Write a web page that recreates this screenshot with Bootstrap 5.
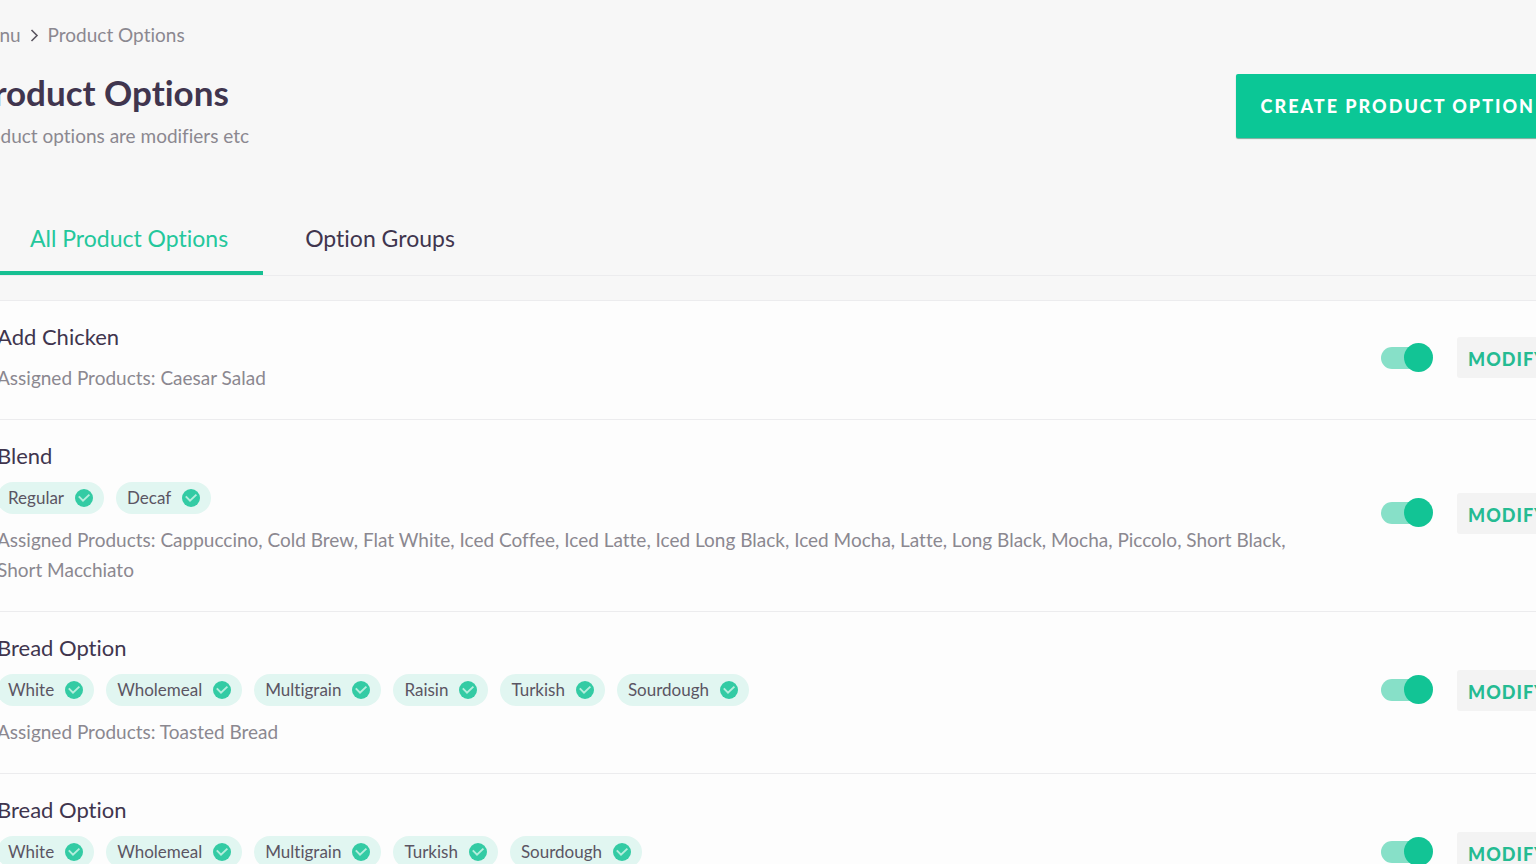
<!DOCTYPE html>
<html lang="en">
<head>
<meta charset="utf-8">
<meta name="viewport" content="width=device-width, initial-scale=1">
<title>Product Options</title>
<link href="https://cdn.jsdelivr.net/npm/bootstrap@5.3.0/dist/css/bootstrap.min.css" rel="stylesheet">
<style>
  :root { --ink: #40354e; --soft: #8b8890; --brand: #0bc796; --rule: #ececee; }
  html { overflow: hidden; }
  body { background: #f7f7f7; color: var(--ink); font-family: Lato, sans-serif; font-size: 19px; line-height: 30px; font-variant-ligatures: none; overflow: hidden; height: 100vh; }
  /* the page runs past both sides of the window */
  .bleed { margin: 0 -24px 0 -28px; padding-top: 20px; }
  .crumbs { --bs-breadcrumb-margin-bottom: 0; gap: 9px; color: var(--soft); }
  .crumbs a { color: inherit; text-decoration: none; }
  .page-title { font-size: 35px; line-height: 40px; font-weight: 700; margin: 0 0 9px; }
  .soft { color: var(--soft); }
  .page-head { margin-top: 22px; }
  .btn-create { --bs-btn-padding-x: 25px; --bs-btn-color: #fff; --bs-btn-bg: var(--brand); --bs-btn-hover-color: #fff; --bs-btn-hover-bg: #0ab588; --bs-btn-border-radius: 2px; height: 64px; margin-top: 2px; font-size: 18px; font-weight: 900; letter-spacing: 2px; border: 0; white-space: nowrap; box-shadow: 0 1px 1px #7aa99b; }
  .btn-modify { --bs-btn-padding-x: 11px; --bs-btn-color: #25bb92; --bs-btn-bg: #f3f3f3; --bs-btn-hover-color: #0aa77d; --bs-btn-hover-bg: #eaeaea; --bs-btn-border-radius: 3px; width: 103px; height: 41px; padding-top: 8px; padding-bottom: 4px; font-size: 18px; font-weight: 900; letter-spacing: 1px; border: 0; text-align: left; }
  .tabs { margin-top: 53px; padding-left: 23px; gap: 7px; font-size: 23px; line-height: 30px; border-bottom: 1px solid var(--rule); }
  .tabs .nav-link { --bs-nav-link-color: var(--ink); --bs-nav-link-hover-color: var(--brand); padding: 19px 35px 18px; border-bottom: 4px solid transparent; font-weight: 400; }
  .tabs .nav-link.active { color: #24c79c; border-bottom-color: #17c092; }
  .options { margin-top: 24px; background: #fdfdfd; border-top: 1px solid var(--rule); }
  .option-row { padding: 21px 0 26px 25px; gap: 60px; border-bottom: 1px solid var(--rule); }
  .option-text { gap: 11px; min-width: 0; }
  .option-name { font-size: 22px; line-height: 30px; font-weight: 400; margin: 0; }
  .chips { gap: 12px; }
  .chip { height: 32px; padding: 0 11px; gap: 11px; border-radius: 16px; background: #e1f6f1; font-size: 17px; line-height: 30px; color: #5b5563; }
  .chip svg { width: 18px; height: 18px; flex: none; }
  .switch { appearance: none; position: relative; width: 46px; height: 22px; margin: 0 6px 0 0; border-radius: 11px; background: #87e0c8; flex: none; }
  .switch::after { content: ""; position: absolute; top: -4px; left: 0; width: 29px; height: 29px; border-radius: 50%; background: #c9c9cd; }
  .switch:checked::after { left: 23px; background: #12c495; }
</style>
</head>
<body>
<svg class="d-none" aria-hidden="true">
  <symbol id="tick" viewBox="0 0 18 18">
    <circle cx="9" cy="9" r="9" fill="#33cba4"/>
    <path d="M3.800 7.400 8 11.600 14.400 5.600" fill="none" stroke="#b5eedd" stroke-width="1.900"/>
  </symbol>
</svg>
<main class="bleed">
  <nav aria-label="Breadcrumb">
    <ol class="crumbs breadcrumb align-items-center">
      <li><a href="#">Menu</a></li>
      <li class="d-flex" aria-hidden="true"><svg width="9" height="14" viewBox="0 0 9 14"><path d="M1.500 2 7 7.500l-5.500 5.500" fill="none" stroke="#5a5560" stroke-width="1.600"/></svg></li>
      <li aria-current="page">Product Options</li>
    </ol>
  </nav>
  <header class="page-head d-flex justify-content-between align-items-start">
    <div>
      <h1 class="page-title">Product Options</h1>
      <p class="soft mb-0">Product options are modifiers etc</p>
    </div>
    <button type="button" class="btn btn-create">CREATE PRODUCT OPTION</button>
  </header>
  <ul class="tabs nav">
    <li class="nav-item"><a class="nav-link active" aria-current="page" href="#">All Product Options</a></li>
    <li class="nav-item"><a class="nav-link" href="#">Option Groups</a></li>
  </ul>
  <section class="options" id="options" aria-label="All product options"></section>
</main>
<script src="https://cdn.jsdelivr.net/npm/bootstrap@5.3.0/dist/js/bootstrap.bundle.min.js"></script>
<script>
  const options = [
    { name: 'Add Chicken', values: [], products: 'Caesar Salad' },
    { name: 'Blend', values: ['Regular', 'Decaf'], products: 'Cappuccino, Cold Brew, Flat White, Iced Coffee, Iced Latte, Iced Long Black, Iced Mocha, Latte, Long Black, Mocha, Piccolo, Short Black, Short Macchiato' },
    { name: 'Bread Option', values: ['White', 'Wholemeal', 'Multigrain', 'Raisin', 'Turkish', 'Sourdough'], products: 'Toasted Bread' },
    { name: 'Bread Option', values: ['White', 'Wholemeal', 'Multigrain', 'Turkish', 'Sourdough'], products: 'Toasted Bread' }
  ];
  const chip = v => `<li class="chip d-inline-flex align-items-center">${v}<svg aria-hidden="true"><use href="#tick"/></svg></li>`;
  document.getElementById('options').innerHTML = options.map((o, i) => `
    <article class="option-row d-flex align-items-center">
      <div class="option-text d-flex flex-column flex-grow-1">
        <h2 class="option-name"><label for="on${i}">${o.name}</label></h2>
        ${o.values.length ? `<ul class="chips list-unstyled d-flex flex-wrap mb-0">${o.values.map(chip).join('')}</ul>` : ''}
        <p class="soft mb-0">Assigned Products: ${o.products}</p>
      </div>
      <div class="d-flex align-items-center gap-4 flex-shrink-0">
        <input class="switch" type="checkbox" role="switch" id="on${i}" checked>
        <button type="button" class="btn btn-modify">MODIFY</button>
      </div>
    </article>`).join('');
</script>
</body>
</html>
